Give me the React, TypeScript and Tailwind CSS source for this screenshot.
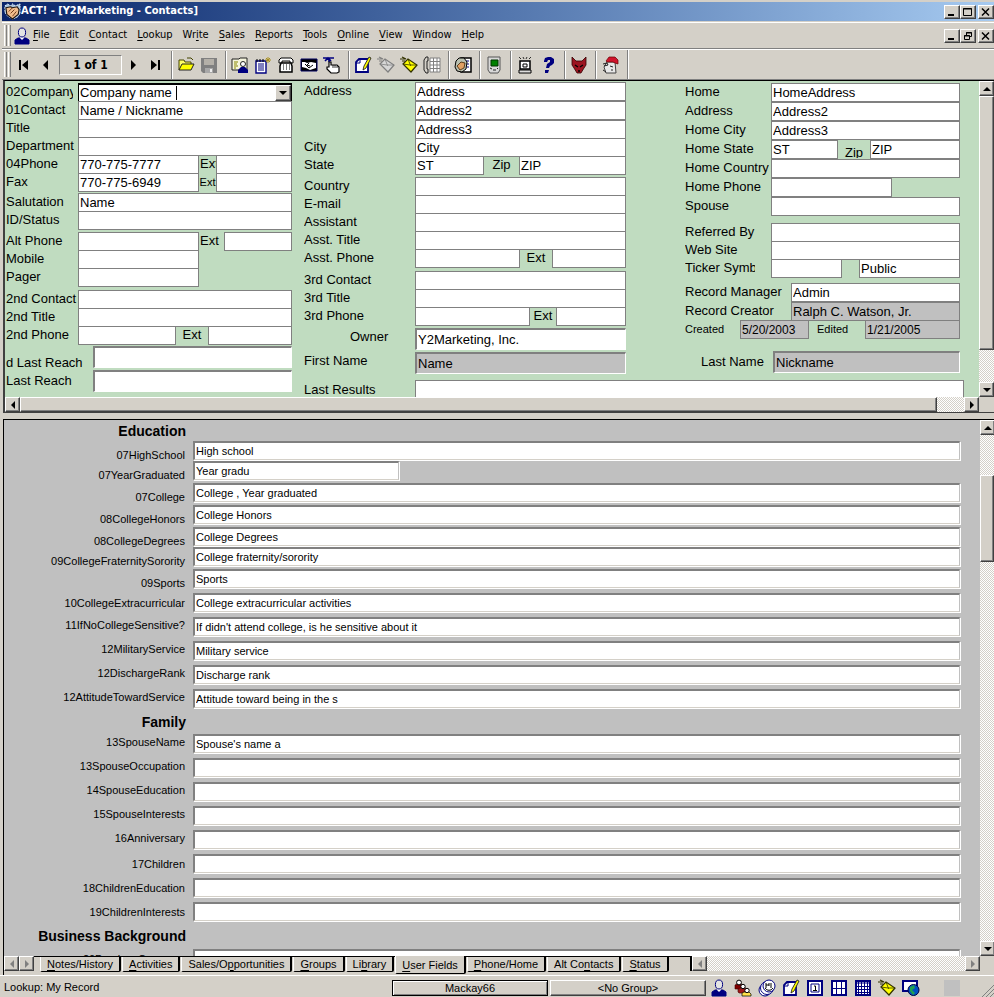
import { useId, type ReactNode } from 'react'
import { clsx } from 'clsx'

const raised =
  'bg-[#d4d0c8] border border-t-white border-l-white border-r-[#404040] border-b-[#404040] shadow-[inset_-1px_-1px_0_#808080]'
const dither = 'bg-[repeating-conic-gradient(#ffffff_0_25%,#d4d0c8_0_50%)] bg-[length:2px_2px]'

interface IconProps {
  children: ReactNode
  size?: string
}

function Icon({ children, size = 'size-[18px]' }: IconProps) {
  return (
    <svg viewBox="0 0 18 18" className={clsx('shrink-0', size)} aria-hidden="true">
      {children}
    </svg>
  )
}

function PersonIcon() {
  return (
    <Icon>
      <path d="M2 17v-4l3-2h8l3 2v4z" fill="#000080" stroke="#000080" />
      <path d="M7 10h4v1l-2 2-2-2z" fill="#fff" />
      <ellipse cx="9" cy="5.5" rx="3.6" ry="4.5" fill="#e4e4e4" stroke="#000080" />
    </Icon>
  )
}

function GroupIcon() {
  return (
    <Icon>
      <path d="M1 9V6l2-1h5l2 2v3H1z" fill="#800000" stroke="#400000" strokeWidth=".6" />
      <circle cx="5" cy="3.5" r="2.4" fill="#fff" stroke="#000" />
      <path d="M4 13v-3l2-1h6l2 2v3H5z" fill="#a01818" stroke="#400000" strokeWidth=".6" />
      <circle cx="9" cy="7.500" r="2.2" fill="#fff" stroke="#000" />
      <path d="M8 17v-3l2-1h5l2 2v2z" fill="#ffe14a" stroke="#000" strokeWidth=".7" />
      <circle cx="13" cy="11.5" r="2.2" fill="#fff" stroke="#000" />
    </Icon>
  )
}

function HandshakeIcon() {
  return (
    <Icon size="size-[17px]">
      <path d="M1 3l3-2 3 2 2-2 3 2 5-2v10l-3 4-5 2-5-3-3-4z" fill="#a9c4de" stroke="#e8f2fb" strokeDasharray="2 1" />
      <path d="M2 5l5-1 2 1 5-1 2 3-1 5-6 5-6-5z" fill="#f2bd8c" stroke="#1c1410" strokeWidth="1.2" />
      <path d="M5 9l4-4M7 11l4-4M9 14l4-5" stroke="#6b3515" />
    </Icon>
  )
}

function EnvelopeIcon({ fill, line }: { fill: string; line: string }) {
  return (
    <Icon>
      <path d="M0 3h5M2 5h3M2 1l4 2" stroke={line} strokeWidth="1.2" />
      <path d="M3 8l5-5 9 6-6 7z" fill={fill} stroke={line} strokeWidth="1.2" />
      <path d="M3 8l7 1 .5 .5L8 3M10 9l7 0" stroke={line} fill="none" strokeWidth=".8" />
    </Icon>
  )
}

function NoteIcon() {
  return (
    <Icon>
      <path d="M5 3h9v13H2V6z" fill="#fff" stroke="#000080" strokeWidth="1.8" />
      <path d="M2 7h4V3" stroke="#000080" fill="none" />
      <path d="M15 1l2 1-5 10-3 2 1-4z" fill="#ffff00" stroke="#222" strokeWidth=".9" />
    </Icon>
  )
}

interface Tool {
  title: string
  icon: ReactNode
}

const recordTools: Tool[][] = [
  [
    {
      title: 'Open',
      icon: (
        <Icon>
          <path d="M2 14V4h5l1 2h6v3" fill="#ffff66" stroke="#444400" />
          <path d="M2 14l3-6h12l-3 6z" fill="#ffff00" stroke="#222" />
          <path d="M10 2h4l2 2" stroke="#444400" fill="none" />
        </Icon>
      ),
    },
    {
      title: 'Save',
      icon: (
        <Icon>
          <path d="M1 2h16v15H3l-2-2z" fill="#808080" />
          <path d="M4 3h10v6H4z" fill="#b4b0a8" />
          <path d="M5 12h8v5H5z" fill="#a8a8a8" />
          <path d="M10 13h2v3h-2z" fill="#eee" />
        </Icon>
      ),
    },
  ],
  [
    {
      title: 'Contact List',
      icon: (
        <Icon>
          <path d="M1 3h7l1-1h7v12H1z" fill="#f4f4dc" stroke="#222" />
          <path d="M3 6h4M3 8h3M3 10h4M3 12h2" stroke="#888800" />
          <circle cx="12" cy="8" r="2.5" fill="#fff" stroke="#222" />
          <path d="M7 17v-3l3-3h4l3 3v3z" fill="#000080" />
        </Icon>
      ),
    },
    {
      title: 'New Activity',
      icon: (
        <Icon>
          <path d="M2 5h10v12H2z" fill="#fff" stroke="#000080" strokeWidth="1.4" />
          <path d="M3 3v3M6 3v3M9 3v3" stroke="#000" />
          <path d="M4 8h6M4 10h6M4 12h6M4 14h6" stroke="#000080" />
          <path d="M14 1v6M11 4h6M12 2l4 4M16 2l-4 4" stroke="#a89020" />
        </Icon>
      ),
    },
    {
      title: 'Phone Call',
      icon: (
        <Icon>
          <path d="M2 7V4l2-2h10l2 2v3h-3V5H5v2z" fill="#fff" stroke="#000" />
          <path d="M4 7h10l1 3v6H3v-6z" fill="#fff" stroke="#000" strokeWidth="1.5" />
          <path d="M6 9h1M9 9h1M12 9h1M6 11h1M9 11h1M12 11h1M6 13h1M9 13h1M12 13h1" stroke="#000" />
        </Icon>
      ),
    },
    {
      title: 'Meeting',
      icon: (
        <Icon>
          <path d="M1 3h16v12H1z" fill="#000" stroke="#000060" />
          <path d="M2 6h3l2 1 4-1 5 1v5l-3 1-3 1-4-2-4-1z" fill="#fff" />
          <path d="M5 8l4 4 4-3M9 7l-2 2 3 1" stroke="#000" fill="none" />
        </Icon>
      ),
    },
    {
      title: 'To-do',
      icon: (
        <Icon>
          <path d="M0 2h11M2 5l3-3 3 3M6 2v4" stroke="#000080" strokeWidth="1.6" fill="none" />
          <path d="M6 6h2v3h6l2 2v5l-2 1H8l-4-4v-2h2z" fill="#fff" stroke="#000" strokeWidth="1.2" />
          <path d="M10 9v3M12 9v3M14 10v2" stroke="#000" strokeWidth=".8" />
        </Icon>
      ),
    },
  ],
  [
    { title: 'Note', icon: <NoteIcon /> },
    { title: 'Letter', icon: <EnvelopeIcon fill="#d6d6d6" line="#808080" /> },
    { title: 'E-mail', icon: <EnvelopeIcon fill="#ffff00" line="#333300" /> },
    {
      title: 'Dial',
      icon: (
        <Icon>
          <path d="M7 2h10v14H7zM7 5.500h10M7 9h10M7 12.500h10M10.500 2v14M14 2v14" fill="#fff" stroke="#808080" />
          <path d="M5 1H3L1 4v10l2 3h2v-4H4V5h1z" fill="#d4d0c8" stroke="#222" />
        </Icon>
      ),
    },
  ],
  [
    {
      title: 'Lookup Online',
      icon: (
        <Icon>
          <path d="M7 2h10v14H7z" fill="#fff" stroke="#000" strokeWidth="1.5" />
          <path d="M12 5h3M13 8h2M13 11h2" stroke="#000080" />
          <path d="M2 5l3-3h5l3 4-1 7-4 3-5-1-2-4z" fill="#b9c0b0" stroke="#000" />
          <path d="M3 10l4-4 4 1-1 5-4 2z" fill="#e0a064" stroke="#402000" strokeWidth=".8" />
        </Icon>
      ),
    },
  ],
  [
    {
      title: 'Handheld',
      icon: (
        <Icon>
          <path d="M3 1h12v13l-2 3H5l-2-3z" fill="#d8d8d8" stroke="#555" />
          <path d="M6 4h7v6H6z" fill="#008000" stroke="#003000" />
          <path d="M5 12l2 1M8 14h3M12 13l1-1" stroke="#222" />
        </Icon>
      ),
    },
  ],
  [
    {
      title: 'Web',
      icon: (
        <Icon>
          <path d="M3 1l2 2M7 1l1 2M11 1l-1 2M15 1l-2 2" stroke="#000" strokeWidth=".8" />
          <path d="M4 5h10v8H4z" fill="#fff" stroke="#000" strokeWidth="1.5" />
          <path d="M7 8h4v3H7z" fill="none" stroke="#000" />
          <path d="M3 14h12v3H3z" fill="#ddd" stroke="#000" />
        </Icon>
      ),
    },
    {
      title: 'Help',
      icon: (
        <Icon>
          <path d="M5 5l1-3 3-1h3l3 2v4l-2 2-2 1-1 2H7l1-4 3-2V4H9L8 6H5z" fill="#000080" />
          <path d="M6 14h4l-1 3H6z" fill="#000080" />
        </Icon>
      ),
    },
  ],
  [
    {
      title: 'Fox',
      icon: (
        <Icon>
          <path d="M2 1l4 4h6l4-4v8l-2 3-3 5H7l-3-5-2-3z" fill="#9c1420" stroke="#300" strokeWidth=".8" />
          <path d="M5 9l3 2M13 9l-3 2M8 15h2" stroke="#000" strokeWidth="1.3" />
        </Icon>
      ),
    },
  ],
  [
    {
      title: 'Agent',
      icon: (
        <Icon>
          <path d="M6 6h8l1 11H5l-2-6z" fill="#e8e8e8" stroke="#444" />
          <path d="M5 5l3-4h6l3 3v4l-3-1-2-1H6z" fill="#d0142c" stroke="#600" strokeWidth=".7" />
          <path d="M2 8l4-1 1 2-4 1M2 14l3 2M9 10l3 1M10 14h2" stroke="#222" fill="none" />
        </Icon>
      ),
    },
  ],
]

type Direction = 'up' | 'down' | 'left' | 'right'

function Arrow({ dir, muted }: { dir: Direction; muted?: boolean }) {
  const points = {
    up: '0,6 4,2 8,6',
    down: '0,2 8,2 4,6',
    left: '6,0 2,4 6,8',
    right: '2,0 6,4 2,8',
  }
  return (
    <svg viewBox="0 0 8 8" className="size-2" aria-hidden="true">
      <polygon points={points[dir]} fill={muted ? '#808080' : '#000'} />
    </svg>
  )
}

function ArrowButton({ dir, label, muted }: { dir: Direction; label: string; muted?: boolean }) {
  return (
    <button aria-label={label} className={clsx('grid place-items-center shrink-0 size-[15px]', raised)}>
      <Arrow dir={dir} muted={muted} />
    </button>
  )
}

function WindowButtons({ restore }: { restore?: boolean }) {
  const button = clsx('grid place-items-center w-4 h-3.5', raised)
  return (
    <div className="flex ml-auto">
      <button className={button} aria-label="Minimize">
        <svg viewBox="0 0 10 10" className="size-2.5"><path d="M1 7h6v2H1z" /></svg>
      </button>
      <button className={button} aria-label={restore ? 'Restore' : 'Maximize'}>
        <svg viewBox="0 0 10 10" className="size-2.5" fill="none" stroke="#000">
          {restore ? (
            <path d="M3.5 4V1.5h5v4H7M3 2h6M1.5 4.5h5v4h-5zM1 5h6" />
          ) : (
            <path d="M.5 1.5h8v7h-8zM0 2h9" />
          )}
        </svg>
      </button>
      <button className={clsx('ml-0.5', button)} aria-label="Close">
        <svg viewBox="0 0 10 10" className="size-2.5" stroke="#000" strokeWidth="1.5"><path d="M1 1.5l7 7M8 1.5l-7 7" /></svg>
      </button>
    </div>
  )
}

function Grip() {
  return (
    <div className="flex gap-px self-stretch py-0.5 mr-0.5">
      <span className="w-[3px] border-l border-white border-r border-r-[#808080]" />
      <span className="w-[3px] border-l border-white border-r border-r-[#808080]" />
    </div>
  )
}

// "&" marks the accelerator letter
function Accel({ text }: { text: string }) {
  const i = text.indexOf('&')
  return (
    <span>
      {text.slice(0, i)}
      <u className="underline-offset-2">{text[i + 1]}</u>
      {text.slice(i + 2)}
    </span>
  )
}

const menus = ['&File', '&Edit', '&Contact', '&Lookup', 'Wr&ite', '&Sales', '&Reports', '&Tools', '&Online', '&View', '&Window', '&Help']

function Toolbar() {
  const nav = 'grid place-items-center w-[22px] h-6'
  return (
    <div className="flex items-center h-[31px] pl-0.5 border-t border-t-white border-b border-b-[#808080]">
      <Grip />
      <button className={nav} aria-label="First record">
        <svg viewBox="0 0 12 12" className="size-3"><path d="M1 1h2v10H1zM10 1v10L4 6z" /></svg>
      </button>
      <button className={nav} aria-label="Previous record">
        <svg viewBox="0 0 12 12" className="size-3"><path d="M8 1v10L3 6z" /></svg>
      </button>
      <div className="grid place-items-center w-[63px] h-5 ml-0.5 border border-t-[#808080] border-l-[#808080] border-r-white border-b-white text-xs font-bold font-['DejaVu_Sans_Condensed','Liberation_Sans',sans-serif]">
        1 of 1
      </div>
      <button className={nav} aria-label="Next record">
        <svg viewBox="0 0 12 12" className="size-3"><path d="M4 1v10l5-5z" /></svg>
      </button>
      <button className={nav} aria-label="Last record">
        <svg viewBox="0 0 12 12" className="size-3"><path d="M2 1v10l6-5zM9 1h2v10H9z" /></svg>
      </button>
      {recordTools.map((group, i) => (
        <div key={i} className="flex items-center">
          <span className="w-0.5 h-7 ml-[5px] mr-px border-l border-l-[#808080] border-r border-r-white" />
          {group.map((tool) => (
            <button key={tool.title} title={tool.title} className="grid place-items-center w-[23px] h-6">
              {tool.icon}
            </button>
          ))}
        </div>
      ))}
      <span className="w-0.5 h-full ml-1.5 border-l border-l-[#808080] border-r border-r-white" />
    </div>
  )
}

const flat = 'h-[19px] border-[#808080]'
const sunken = 'h-[22px] border-t-2 border-l-2 border-t-[#808080] border-l-[#808080] border-r-white border-b-white'

interface FieldProps {
  label: string
  value?: string
  id?: string
  className?: string
  grey?: boolean
  deep?: boolean
}

function Field({ label, value, id, className = 'flex-1', grey, deep }: FieldProps) {
  return (
    <input
      id={id}
      aria-label={id ? undefined : label}
      defaultValue={value}
      readOnly={grey}
      className={clsx('min-w-0 border pl-px leading-4 outline-none', deep ? sunken : flat, grey ? 'bg-[#c0c0c0]' : 'bg-white', className)}
    />
  )
}

interface RowProps {
  label: string
  value?: string
  text?: string
  labelClass: string
  className?: string
  field?: string
  grey?: boolean
  deep?: boolean
  children?: ReactNode
}

function Row({ label, text, value, labelClass, className = 'h-[18px]', field, grey, deep, children }: RowProps) {
  const id = useId()
  return (
    <div className={clsx('flex items-start', className)}>
      <label htmlFor={id} className={clsx('shrink-0 overflow-hidden whitespace-nowrap leading-[18px]', labelClass)}>
        {text ?? label}
      </label>
      <Field id={id} label={label} value={value} className={field} grey={grey} deep={deep} />
      {children}
    </div>
  )
}

function Ext({ children, className }: { children: ReactNode; className: string }) {
  return <span className={clsx('shrink-0 overflow-hidden text-center leading-[18px] h-[18px]', className)}>{children}</span>
}

function CompanyRow() {
  const id = useId()
  return (
    <div className="flex h-[18px]">
      <label htmlFor={id} className="w-[67px] mr-[5px] shrink-0 overflow-hidden whitespace-nowrap leading-[18px]">02Company</label>
      <div className="flex flex-1 items-center h-[19px] bg-white border border-t-2 border-black border-b-[#808080]">
        <input id={id} defaultValue="Company name" className="[field-sizing:content] pl-px leading-4 outline-none" />
        <span className="w-px h-3.5 ml-1 bg-black" />
        <button aria-label="Show companies" className={clsx('grid place-items-center w-4 h-4 ml-auto', raised)}>
          <Arrow dir="down" />
        </button>
      </div>
    </div>
  )
}

function LeftColumn() {
  const l = 'w-[72px]'
  return (
    <div className="shrink-0 w-[287px] pt-0.5 pl-px">
      <CompanyRow />
      <Row label="01Contact" value="Name / Nickname" labelClass={l} />
      <Row label="Title" labelClass={l} />
      <Row label="Department" labelClass={l} />
      <Row label="04Phone" value="770-775-7777" labelClass={l} field="w-[121px]">
        <Ext className="w-[17px] text-left pl-px">Ext</Ext>
        <Field label="Phone extension" />
      </Row>
      <Row label="Fax" value="770-775-6949" labelClass={l} field="w-[121px]">
        <Ext className="w-[17px] text-[11px]">Ext</Ext>
        <Field label="Fax extension" />
      </Row>
      <Row label="Salutation" value="Name" labelClass={l} className="h-[18px] mt-0.5" />
      <Row label="ID/Status" labelClass={l} />
      <Row label="Alt Phone" labelClass={l} className="h-[18px] mt-[3px]" field="w-[121px]">
        <Ext className="w-[25px] pr-1">Ext</Ext>
        <Field label="Alt extension" />
      </Row>
      <Row label="Mobile" labelClass={l} field="w-[121px]" />
      <Row label="Pager" labelClass={l} field="w-[121px]" />
      <Row label="2nd Contact" labelClass={l} className="h-[18px] mt-1" />
      <Row label="2nd Title" labelClass={l} />
      <Row label="2nd Phone" labelClass={l} field="w-[98px]">
        <Ext className="w-8">Ext</Ext>
        <Field label="2nd extension" />
      </Row>
      <Row label="Attempted Last Reach" text="d Last Reach" labelClass="w-[87px] pt-2" className="h-[22px] mt-0.5" deep />
      <Row label="Last Reach" labelClass="w-[87px] pt-0.5" className="h-[22px] mt-0.5" deep />
    </div>
  )
}

function MiddleColumn() {
  const l = 'w-[111px]'
  return (
    <div className="min-w-0 pt-px pr-[59px]">
      <Row label="Address" value="Address" labelClass={l} className="h-[19px]" />
      <Row label="Address 2" text="" value="Address2" labelClass={l} className="h-[19px]" />
      <Row label="Address 3" text="" value="Address3" labelClass={l} />
      <Row label="City" value="City" labelClass={l} />
      <Row label="State" value="ST" labelClass={l} field="w-[69px]">
        <Ext className="w-[35px]">Zip</Ext>
        <Field label="Zip" value="ZIP" />
      </Row>
      <Row label="Country" labelClass={l} className="h-[18px] mt-[3px]" />
      <Row label="E-mail" labelClass={l} />
      <Row label="Assistant" labelClass={l} />
      <Row label="Asst. Title" labelClass={l} />
      <Row label="Asst. Phone" labelClass={l} field="w-[105px]">
        <Ext className="w-8">Ext</Ext>
        <Field label="Assistant extension" />
      </Row>
      <Row label="3rd Contact" labelClass={l} className="h-[18px] mt-1" />
      <Row label="3rd Title" labelClass={l} />
      <Row label="3rd Phone" labelClass={l} field="w-[115px]">
        <Ext className="w-[26px]">Ext</Ext>
        <Field label="3rd extension" />
      </Row>
      <Row label="Owner" value="Y2Marketing, Inc." labelClass={clsx(l, 'pl-[46px]')} className="h-[22px] mt-[3px]" deep />
      <Row label="First Name" value="Name" labelClass={l} className="h-[22px] mt-0.5" deep grey />
    </div>
  )
}

function RightColumn() {
  const l = 'w-[86px]'
  return (
    <div className="min-w-0 pt-0.5 pr-[19px]">
      <Row label="Home" value="HomeAddress" labelClass={l} className="h-[19px]" />
      <Row label="Address" value="Address2" labelClass={clsx(l, 'leading-3')} className="h-[19px]" />
      <Row label="Home City" value="Address3" labelClass={l} className="h-[19px]" />
      <Row label="Home State" value="ST" labelClass={l} className="h-[19px]" field="w-[67px]">
        <Ext className="w-8 pt-1">Zip</Ext>
        <Field label="Home zip" value="ZIP" />
      </Row>
      <Row label="Home Country" labelClass={l} className="h-[19px]" />
      <Row label="Home Phone" labelClass={l} className="h-[19px]" field="w-[121px]" />
      <Row label="Spouse" labelClass={l} />
      <Row label="Referred By" labelClass={l} className="h-[18px] mt-2" />
      <Row label="Web Site" labelClass={l} />
      <Row label="Ticker Symbol" labelClass="w-[70px] mr-4" field="w-[71px]">
        <Field label="Ownership" value="Public" className="flex-1 ml-[17px]" />
      </Row>
      <Row label="Record Manager" value="Admin" labelClass="w-[106px]" className="h-[19px] mt-1.5" />
      <Row label="Record Creator" value="Ralph C. Watson, Jr." labelClass="w-[106px]" grey />
      <div className="flex gap-1 text-xs">
        <label htmlFor="created" className="w-[51px] text-[11px] leading-[18px]">Created</label>
        <Field id="created" label="Created" value="5/20/2003" className="w-[69px]" grey />
        <label htmlFor="edited" className="w-12 pl-1 text-[11px] leading-[18px]">Edited</label>
        <Field id="edited" label="Edited" value="1/21/2005" grey />
      </div>
      <Row label="Last Name" value="Nickname" labelClass="w-[88px] pl-4 pt-0.5" className="h-[22px] mt-3" deep grey />
    </div>
  )
}

interface UserField {
  label: string
  value?: string
  gap?: string
  align?: string
  narrow?: boolean
}

const low = 'pt-2'
const high = 'pb-1'

const education: UserField[] = [
  { label: '07HighSchool', value: 'High school', align: low },
  { label: '07YearGraduated', value: 'Year gradu', align: low, narrow: true },
  { label: '07College', value: 'College , Year graduated', gap: 'mt-0.5', align: low },
  { label: '08CollegeHonors', value: 'College Honors', gap: 'mt-0.5', align: low },
  { label: '08CollegeDegrees', value: 'College Degrees', gap: 'mt-0.5', align: low },
  { label: '09CollegeFraternitySorority', value: 'College fraternity/sorority', align: low },
  { label: '09Sports', value: 'Sports', gap: 'mt-0.5', align: low },
  { label: '10CollegeExtracurricular', value: 'College extracurricular activities', gap: 'mt-1' },
  { label: '11IfNoCollegeSensitive?', value: "If didn't attend college, is he sensitive about it", gap: 'mt-1', align: high },
  { label: '12MilitaryService', value: 'Military service', gap: 'mt-1', align: high },
  { label: '12DischargeRank', value: 'Discharge rank', gap: 'mt-1', align: high },
  { label: '12AttitudeTowardService', value: 'Attitude toward being in the s', gap: 'mt-1', align: high },
]

const family: UserField[] = [
  { label: '13SpouseName', value: "Spouse's name a", align: high },
  { label: '13SpouseOccupation', gap: 'mt-1', align: high },
  { label: '14SpouseEducation', gap: 'mt-1', align: high },
  { label: '15SpouseInterests', gap: 'mt-1', align: high },
  { label: '16Anniversary', gap: 'mt-1', align: high },
  { label: '17Children', gap: 'mt-1' },
  { label: '18ChildrenEducation', gap: 'mt-1' },
  { label: '19ChildrenInterests', gap: 'mt-1' },
]

const business: UserField[] = [{ label: '20PreviousCompany' }]

function Section({ title, titleClass, fields }: { title: string; titleClass: string; fields: UserField[] }) {
  return (
    <section>
      <h2 className={clsx('flex items-center justify-end w-[182px] text-sm font-bold', titleClass)}>{title}</h2>
      {fields.map((f) => (
        <div key={f.label} className={clsx('flex pr-5', f.gap)}>
          <label htmlFor={f.label} className={clsx('flex items-center justify-end shrink-0 w-[181px] h-5 mr-2', f.align)}>
            {f.label}
          </label>
          <input
            id={f.label}
            defaultValue={f.value}
            className={clsx(
              'h-[19px] pl-px bg-white outline-none border-t-2 border-l-2 border-[#808080] border-r border-b border-r-[#c0c0c0] border-b-[#d4d0c8] shadow-[1px_1px_0_#ffffff]',
              f.narrow ? 'w-[206px]' : 'flex-1 min-w-0',
            )}
          />
        </div>
      ))}
    </section>
  )
}

const tabs = ['&Notes/History', '&Activities', 'Sales/O&pportunities', '&Groups', 'Li&brary', '&User Fields', '&Phone/Home', 'Alt Co&ntacts', '&Status']

function TabStrip() {
  return (
    <div className="flex items-start h-[19px] shrink-0 bg-[#d4d0c8]">
      <ArrowButton dir="left" label="Previous tab" muted />
      <ArrowButton dir="right" label="Next tab" muted />
      <div role="tablist" className="flex items-start gap-px pl-1.5 flex-1 border-t border-black">
        {tabs.map((tab) => {
          const active = tab === '&User Fields'
          return (
            <button
              key={tab}
              role="tab"
              aria-selected={active}
              className={clsx(
                'px-1.5 rounded-b-xs border-r-2 border-b border-black bg-[#d4d0c8] border-l border-l-white whitespace-nowrap leading-[13px]',
                active ? '-mt-px pt-0.5 h-[18px]' : 'h-[15px]',
              )}
            >
              <Accel text={tab} />
            </button>
          )
        })}
      </div>
      <div className="flex w-[290px] border-l-2 border-black">
        <ArrowButton dir="left" label="Scroll left" muted />
        <div className={clsx('flex-1', dither)} />
        <ArrowButton dir="right" label="Scroll right" muted />
      </div>
      <div className="w-3.5" />
    </div>
  )
}

const statusTools: Tool[] = [
  { title: 'Contacts', icon: <PersonIcon /> },
  { title: 'Groups', icon: <GroupIcon /> },
  {
    title: 'Contact list',
    icon: (
      <Icon>
        <circle cx="7" cy="11" r="6" fill="#fff" stroke="#000080" />
        <circle cx="9" cy="9" r="6.5" fill="#fff" stroke="#000080" />
        <circle cx="11" cy="7" r="6" fill="#fff" stroke="#000080" />
        <path d="M8 4v5M8 6h3M11 4v3M13 4v5M7 9c2 3 6 3 8 0" stroke="#000" fill="none" />
      </Icon>
    ),
  },
  { title: 'Task list', icon: <NoteIcon /> },
  {
    title: 'Day',
    icon: (
      <Icon>
        <path d="M2 2h14v14H2z" fill="#fff" stroke="#000080" strokeWidth="2" />
        <path d="M5 5h8v8H5z" fill="none" stroke="#000080" />
        <path d="M8 7h1.5v4M7 11.5h4" stroke="#000" fill="none" />
      </Icon>
    ),
  },
  {
    title: 'Week',
    icon: (
      <Icon>
        <path d="M2 2h14v14H2z" fill="#fff" stroke="#000080" strokeWidth="2" />
        <path d="M6.5 2v14M11.5 2v14M2 9.5h14" stroke="#000080" />
      </Icon>
    ),
  },
  {
    title: 'Month',
    icon: (
      <Icon>
        <path d="M2 2h14v14H2z" fill="#fff" stroke="#000080" strokeWidth="2" />
        <path d="M2 4h14M4.5 2v14M7.5 2v14M10.5 2v14M13.5 2v14M2 7.5h14M2 10.5h14M2 13.5h14" stroke="#000080" />
      </Icon>
    ),
  },
  { title: 'E-mail', icon: <EnvelopeIcon fill="#ffff00" line="#333300" /> },
  {
    title: 'Internet',
    icon: (
      <Icon>
        <path d="M1 2h14v10H1z" fill="#fff" stroke="#000080" strokeWidth="2" />
        <circle cx="11.5" cy="11" r="5.5" fill="#0050c0" stroke="#000040" />
        <path d="M8 8l4-2 1 3-3 2 3 3-2 2-3-4z" fill="#20a050" />
      </Icon>
    ),
  },
]

export default function App() {
  return (
    <div className="flex flex-col h-screen overflow-hidden bg-[#d4d0c8] text-black text-[11px] font-['Liberation_Sans',Arial,sans-serif]">
      <header className="pt-0.5 pl-0.5">
        <div className="flex items-center h-[19px] pl-0.5 bg-linear-to-r from-[#0a246a] to-[#a6caf0] text-white">
          <HandshakeIcon />
          <h1 className="text-[11px] font-bold font-['DejaVu_Sans_Condensed','Liberation_Sans',sans-serif]">ACT! - [Y2Marketing - Contacts]</h1>
          <WindowButtons />
        </div>
        <div className="flex items-center h-[27px] mt-px pl-0.5 border-t border-t-white border-b border-b-[#808080]">
          <Grip />
          <PersonIcon />
          <nav className="flex">
            {menus.map((m) => (
              <button key={m} className="px-[5px] first:pl-0.5 text-[11px] font-['DejaVu_Sans_Condensed','Liberation_Sans',sans-serif]">
                <Accel text={m} />
              </button>
            ))}
          </nav>
          <WindowButtons restore />
        </div>
        <Toolbar />
      </header>

      {/* contact card */}
      <div className="flex flex-col shrink-0 h-[333px] ml-[3px] border-t border-l-2 border-black border-l-[#404040] border-b border-b-[#404040]">
        <div className="flex flex-1 min-h-0">
          <form className="flex flex-1 items-start min-w-0 overflow-hidden bg-[#c0dcc0] text-[13px]">
            <LeftColumn />
            <div className="flex-1 min-w-0 pl-3">
              <div className="grid grid-cols-[381fr_294fr]">
                <MiddleColumn />
                <RightColumn />
              </div>
              <Row label="Last Results" labelClass="w-[111px] pt-px" className="mt-1.5 pr-[15px]" field="flex-1" />
            </div>
          </form>
          <div className={clsx('flex flex-col w-[15px]', dither)}>
            <ArrowButton dir="up" label="Scroll up" />
            <div className={clsx('h-[254px]', raised)} />
            <div className="flex-1" />
            <ArrowButton dir="down" label="Scroll down" />
          </div>
        </div>
        <div className="flex">
          <div className={clsx('flex flex-1', dither)}>
            <ArrowButton dir="left" label="Scroll left" />
            <div className={clsx('flex-1 mr-[27px]', raised)} />
            <ArrowButton dir="right" label="Scroll right" />
          </div>
          <div className="w-[15px]" />
        </div>
      </div>

      {/* user fields */}
      <div className="flex flex-col flex-1 min-h-0 mt-1.5 ml-[3px] border-t border-l border-black">
        <div className="flex flex-1 min-h-0">
          <div className="flex-1 min-w-0 overflow-hidden bg-[#c0c0c0]">
            <Section title="Education" titleClass="h-[21px]" fields={education} />
            <Section title="Family" titleClass="h-[25px]" fields={family} />
            <Section title="Business Background" titleClass="h-[27px]" fields={business} />
          </div>
          <div className={clsx('flex flex-col w-3.5', dither)}>
            <ArrowButton dir="up" label="Scroll up" />
            <div className={clsx('h-[87px] mt-10', raised)} />
            <div className="flex-1" />
            <ArrowButton dir="down" label="Scroll down" />
          </div>
        </div>
        <TabStrip />
      </div>

      <footer className="flex items-center h-[22px] pl-1 pt-0.5 border-t border-white">
        <span className="flex-1">Lookup: My Record</span>
        <button className="w-[156px] h-4 leading-3 border border-black shadow-[inset_1px_1px_0_#ffffff,inset_-1px_-1px_0_#808080]">Mackay66</button>
        <button className={clsx('w-[156px] h-4 ml-0.5 leading-3', raised)}>&lt;No Group&gt;</button>
        <div className="flex gap-1.5 ml-1">
          {statusTools.map((tool) => (
            <button key={tool.title} title={tool.title}>
              {tool.icon}
            </button>
          ))}
        </div>
        <span className="size-4 ml-6 mr-5 bg-[#c0c0c0]" />
        <svg viewBox="0 0 14 14" className="self-end size-3.5" stroke="#808080" aria-hidden="true">
          <path d="M2 14L14 2M6 14l8-8M10 14l4-4" />
        </svg>
      </footer>
    </div>
  )
}
